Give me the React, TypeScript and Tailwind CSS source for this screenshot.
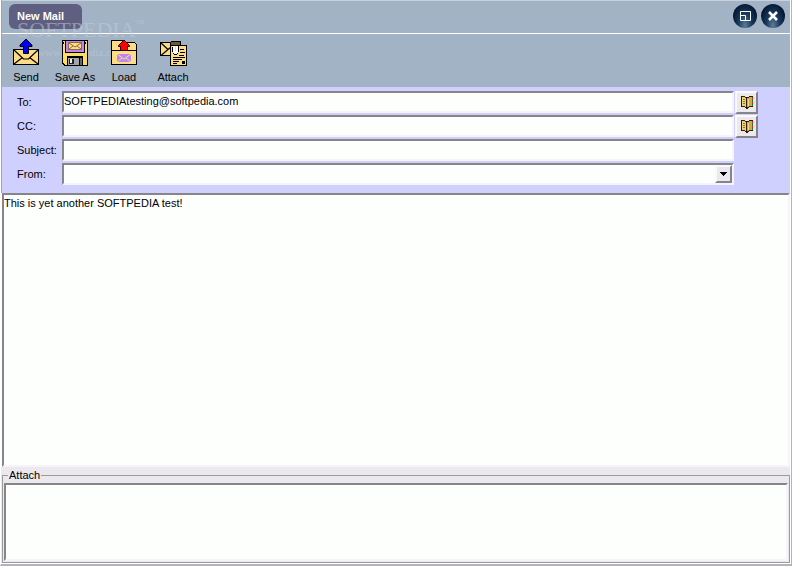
import { useState } from "react";
import type { ReactNode } from "react";

const sunken = "border-2 border-t-[#868688] border-l-[#868688] border-b-[#f4f4fa] border-r-[#f4f4fa] bg-[#fdfffc]";
const raised = "border-2 border-t-[#fafafa] border-l-[#fafafa] border-b-[#858589] border-r-[#858589] bg-[#ebe8ee]";

function SendIcon() {
  return (
    <svg width="28" height="28" viewBox="0 0 28 28" aria-hidden="true">
      <rect x="1.5" y="11.5" width="25" height="15" fill="#fddc85" stroke="#000" shapeRendering="crispEdges" />
      <path d="M2 12L11.5 21H16.5L26 12M2 26L10.5 19.5M26 26L17.5 19.5" fill="none" stroke="#000" strokeWidth="1.2" />
      <path d="M14 1L8 7V8.5H11.5V15.5H16.5V8.5H20V7Z" fill="#0000f4" stroke="#000" />
    </svg>
  );
}

function SaveIcon() {
  return (
    <svg width="28" height="28" viewBox="0 0 28 28" shapeRendering="crispEdges" aria-hidden="true">
      <path d="M1 2H27V28H3L1 26Z" fill="#000" />
      <path d="M2 3H26V27H4L2 25Z" fill="#fddc62" />
      <path d="M4 2H24V15H4Z" fill="#000" />
      <path d="M5 3H23V14H5Z" fill="#bd86f5" />
      <rect x="7.5" y="4.5" width="13" height="7" fill="#fddc85" stroke="#8a6848" />
      <g shapeRendering="auto" fill="none" stroke="#8a6848">
        <path d="M8 5L14 9L20 5M8 11L12 8M20 11L16 8" />
      </g>
      <path d="M6 18H22V27H6Z" fill="#000" />
      <path d="M7 20H18V27H7Z" fill="#a4a4a8" />
      <path d="M8 21H13V26H8Z" fill="#222" />
      <path d="M9 21H11V25H9Z" fill="#f0f0f0" />
      <path d="M19 20H21V27H19Z" fill="#666" />
      <path d="M24 4H25V6H24ZM2 4H3V6H2Z" fill="#000" />
    </svg>
  );
}

function LoadIcon() {
  return (
    <svg width="28" height="28" viewBox="0 0 28 28" aria-hidden="true">
      <g shapeRendering="crispEdges">
        <path d="M1.5 26.5V2.5H12.5L14.5 4.5H24.5L26.5 6.5V26.5Z" fill="#fddc85" stroke="#000" />
        <path d="M2 12.5H26" stroke="#000" />
        <rect x="7" y="16" width="14" height="8" fill="#bd86f5" />
      </g>
      <path d="M7 16L14 21L21 16M7 24L12 20M21 24L16 20" fill="none" stroke="#fddc85" />
      <path d="M14 2L8.5 7.5V8.5H10.5V12.5H17.5V8.5H19.5V7.5Z" fill="#f00" stroke="#200" />
    </svg>
  );
}

function AttachIcon() {
  return (
    <svg width="30" height="28" viewBox="0 0 30 28" aria-hidden="true">
      <rect x="2.5" y="4.5" width="17" height="13" fill="#fddc85" stroke="#000" shapeRendering="crispEdges" />
      <path d="M3 5L10 11.5L3 17.5M10 11.5L13 9" fill="none" stroke="#000" strokeWidth="1.2" />
      <g shapeRendering="crispEdges">
        <path d="M12.5 7.5H28.5V27.5H12.5Z" fill="#fddc85" stroke="#000" />
        <path d="M13 3H22L23 4V8H12V4Z" fill="#000" />
        <path d="M13 4H22V7H13Z" fill="#6c5a30" />
        <path d="M15 8H17V13H18V8H20V14L18 16H16L15 14Z" fill="#fff" />
        <path d="M14.5 9V14M20.5 8V14M15 15.5H16M19 15.5H20M16 16.5H19" fill="none" stroke="#000" />
        <path d="M22 11.5H26M22 14.5H27M21 17.5H26M15 19.500H27M15 21.5H24M15 23.5H21M15 25.5H19" stroke="#000" />
        <path d="M24 23H27V26H24Z" fill="#000" />
      </g>
    </svg>
  );
}

function BookIcon() {
  return (
    <svg width="14" height="14" viewBox="0 0 14 14" shapeRendering="crispEdges" aria-hidden="true">
      <path d="M1 1H5V2H9V1H13V12H9V13H8V14H6V13H5V12H1Z" fill="#2c2004" />
      <path d="M2 2H5V3H6V12H5V11H2Z" fill="#f0d070" />
      <path d="M7 3H9V2H12V11H9V12H7Z" fill="#cfa94c" />
      <path d="M3 4H5V5H3ZM3 6H5V7H3ZM3 8H5V9H3Z" fill="#92742a" />
      <path d="M8 4H9V11H8Z" fill="#f0d88c" />
      <path d="M12 2H13V4H12ZM12 7H13V9H12Z" fill="#f02020" />
      <path d="M12 4H13V7H12ZM12 9H13V11H12Z" fill="#188030" />
    </svg>
  );
}

const tools = [
  { label: "Send", icon: <SendIcon /> },
  { label: "Save As", icon: <SaveIcon /> },
  { label: "Load", icon: <LoadIcon /> },
  { label: "Attach", icon: <AttachIcon /> },
];

function WindowButton({ label, children }: { label: string; children: ReactNode }) {
  return (
    <button type="button" aria-label={label} className="flex size-6 items-center justify-center rounded-full bg-radial-[at_50%_90%] from-[#5d7c98] via-[#17395c] via-40% to-[#03152f] to-80%">
      <svg width="24" height="24" viewBox="0 0 24 24" fill="none" stroke="#fff" aria-hidden="true">{children}</svg>
    </button>
  );
}

function Field({ id, label, book, children }: { id: string; label: string; book?: boolean; children: ReactNode }) {
  return (
    <div className="flex h-6 items-center">
      <label htmlFor={id} className="w-[45px] shrink-0">{label}</label>
      {children}
      <div className="w-6 shrink-0 pl-px">
        {book && (
          <button type="button" aria-label={`Address book for ${label}`} className={`flex h-[23px] w-full items-center justify-center ${raised}`}>
            <BookIcon />
          </button>
        )}
      </div>
    </div>
  );
}

export default function App() {
  const [to, setTo] = useState("SOFTPEDIAtesting@softpedia.com");
  const [cc, setCc] = useState("");
  const [subject, setSubject] = useState("");
  const [body, setBody] = useState("This is yet another SOFTPEDIA test!");

  const input = `h-[22px] min-w-0 flex-1 outline-none pb-0.5 ${sunken}`;

  return (
    <div className="flex h-screen flex-col border-x border-b-2 border-[#b4b4b6] border-l-white bg-white pb-px pr-px font-['Liberation_Sans',Arial,sans-serif] text-[11px] leading-4 text-black">
      <div className="relative border-l border-[#a2a2aa]">
        <header className="flex h-[34px] items-start justify-between border-b border-t border-b-white border-t-[#c8d2dc] bg-[#a2b3c5] pl-[7px] pr-[5px] pt-[3px]">
          <h1 className="flex h-[25px] min-w-[73px] items-center rounded-md bg-[#5f5f82] px-2 pb-px font-bold text-white">New Mail</h1>
          <div className="flex gap-1">
            <WindowButton label="Restore">
              <path d="M7.5 7.5H17.5V16.5H7.5ZM7.5 11.5H12.5V16.5" />
            </WindowButton>
            <WindowButton label="Close">
              <path d="M8 8L16 16M16 8L8 16" strokeWidth="2.5" />
            </WindowButton>
          </div>
        </header>

        <nav className="flex h-[53px] gap-px bg-[#a2b3c5] pt-1">
          {tools.map((tool) => (
            <button key={tool.label} type="button" className="z-10 flex w-12 flex-col items-center gap-[3px] whitespace-nowrap">
              {tool.icon}
              {tool.label}
            </button>
          ))}
        </nav>

        {/* Watermark */}
        <div aria-hidden="true" className="pointer-events-none absolute left-[15px] top-4 font-['Liberation_Serif',serif] text-[#c3cedb]/50">
          <div className="flex items-start text-[22px] leading-7">
            SOFTPEDIA<span className="text-[6px] leading-3">TM</span>
          </div>
          <div className="pl-5 text-[11px] leading-4">www.softpedia.com</div>
        </div>
      </div>

      <section className="border-l border-[#a2a2aa] bg-[#d0d0ff] pb-[7px] pl-[15px] pr-8 pt-[3px]">
        <Field id="to" label="To:" book>
          <input id="to" type="text" value={to} onChange={(e) => setTo(e.target.value)} className={input} />
        </Field>
        <Field id="cc" label="CC:" book>
          <input id="cc" type="text" value={cc} onChange={(e) => setCc(e.target.value)} className={input} />
        </Field>
        <Field id="subject" label="Subject:">
          <input id="subject" type="text" value={subject} onChange={(e) => setSubject(e.target.value)} className={input} />
        </Field>
        <Field id="from" label="From:">
          <div className={`relative h-[22px] min-w-0 flex-1 ${sunken}`}>
            <select id="from" className="h-full w-full appearance-none outline-none">
              <option value=""></option>
            </select>
            <span className={`pointer-events-none absolute inset-y-0 right-0 flex w-[17px] items-center justify-center ${raised}`}>
              <svg width="7" height="4" viewBox="0 0 7 4" shapeRendering="crispEdges" aria-hidden="true"><path d="M0 0H7L3.5 4Z" /></svg>
            </span>
          </div>
        </Field>
      </section>

      <textarea
        aria-label="Message"
        value={body}
        onChange={(e) => setBody(e.target.value)}
        className={`ml-px min-h-0 w-auto flex-1 resize-none outline-none ${sunken}`}
      />

      <section className="bg-[#ebe8ee] pl-px">
        <fieldset className="border border-[#9b9b9f] px-px pb-px">
          <legend className="ml-1 px-px">Attach</legend>
          <ul aria-label="Attachments" className={`h-[78px] ${sunken}`} />
        </fieldset>
      </section>
    </div>
  );
}
